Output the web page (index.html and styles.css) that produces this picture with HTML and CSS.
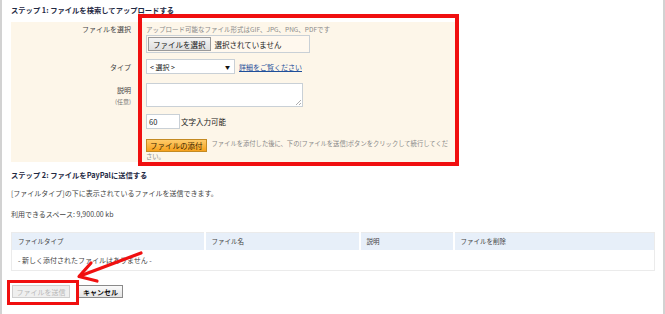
FILE: index.html
```html
<!DOCTYPE html>
<html lang="ja">
<head>
<meta charset="utf-8">
<link rel="stylesheet" href="styles.css">
</head>
<body>
<div class="page">
  <h2 class="step step1">ステップ 1: ファイルを検索してアップロードする</h2>
  <div class="panel">
    <div class="label l1">ファイルを選択</div>
    <div class="field">
      <div class="hint">アップロード可能なファイル形式はGIF、JPG、PNG、PDFです</div>
      <div class="filebox"><span class="filebtn">ファイルを選択</span><span class="nofile">選択されていません</span></div>
    </div>

    <div class="label l2">タイプ</div>
    <div class="field f2">
      <div class="select"><span>&lt; 選択 &gt;</span><span class="caret">▼</span></div>
      <a class="link" href="#">詳細をご覧ください</a>
    </div>

    <div class="label l3">説明<span class="opt">(任意)</span></div>
    <div class="field f3">
      <div class="textarea"><svg class="grip" width="6" height="6" viewBox="0 0 6 6"><path d="M6 1 L1 6 M6 4 L4 6" stroke="#999" stroke-width="0.8"/></svg></div>
    </div>

    <div class="label"></div>
    <div class="field f4">
      <div class="count">60</div><span class="counttext">文字入力可能</span>
    </div>

    <div class="label"></div>
    <div class="field f5">
      <p class="attach"><span class="attachbtn">ファイルの添付</span>ファイルを添付した後に、下の[ファイルを送信]ボタンをクリックして続行してください。</p>
    </div>
  </div>

  <h2 class="step step2">ステップ 2: ファイルをPayPalに送信する</h2>
  <p class="note n1">[ファイルタイプ]の下に表示されているファイルを送信できます。</p>
  <p class="note n2">利用できるスペース: 9,900.00 kb</p>

  <table class="files">
    <thead>
      <tr><th class="c1">ファイルタイプ</th><th class="c2">ファイル名</th><th class="c3">説明</th><th class="c4">ファイルを削除</th></tr>
    </thead>
    <tbody>
      <tr><td colspan="4">- 新しく添付されたファイルはありません -</td></tr>
    </tbody>
  </table>

  <div class="actions">
    <span class="btn disabled">ファイルを送信</span>
    <span class="btn cancel">キャンセル</span>
  </div>

  <div class="mark mark1"></div>
  <div class="mark mark2"></div>
  <svg class="arrow" width="665" height="314" viewBox="0 0 665 314">
    <path d="M141 253 L80 276" stroke="#f01010" stroke-width="3.2" fill="none" stroke-linecap="round"/>
    <path d="M91 263 L79 276.5 L97 281" stroke="#f01010" stroke-width="3.2" fill="none" stroke-linecap="round" stroke-linejoin="round"/>
  </svg>
</div>
</body>
</html>
```

FILE: styles.css
```css
* { box-sizing: border-box; }
html, body { margin: 0; padding: 0; background: #fff; }
body {
  font-family: "Noto Sans CJK JP", "Liberation Sans", sans-serif;
  font-size: 7px;
  color: #333;
}
.page {
  position: relative;
  width: 665px;
  height: 314px;
  border-left: 2px solid #d2d2d2;
  border-right: 2px solid #d2d2d2;
  padding: 0 0 0 9px;
}
.step {
  margin: 0;
  font-size: 7.3px;
  font-weight: bold;
  color: #1f2a44;
  line-height: 10px;
}
.step1 { padding-top: 5px; height: 22px; }
.panel {
  width: 444px;
  height: 140px;
  background: #fdf6e9;
  display: grid;
  grid-template-columns: 120px 1fr;
  column-gap: 15px;
  align-content: start;
  padding-top: 2px;
}
.label {
  text-align: right;
  color: #444;
  line-height: 10px;
}
.l1 { padding-top: 0; }
.l2 { margin-top: 6px; align-self: center; }
.l3 { padding-top: 11px; display: flex; flex-direction: column; align-items: flex-end; }
.opt { font-size: 6px; color: #777; margin-top: 2px; }
.field { padding-right: 4px; }
.hint { color: #8a8a8a; font-size: 6.5px; line-height: 10px; }
.filebox {
  margin-top: 1px;
  width: 164px;
  height: 18px;
  border: 1px solid #c9d0d6;
  background: #fff8ee;
  display: flex;
  align-items: center;
  padding-left: 1px;
}
.filebtn {
  display: inline-flex;
  align-items: center;
  height: 14px;
  padding: 0 4px;
  border: 1px solid #9a9a9a;
  background: linear-gradient(#f4f4f4, #dedede);
  color: #111;
  font-size: 7.5px;
}
.nofile { margin-left: 4px; color: #222; font-size: 7.5px; }
.f2 { margin-top: 6px; display: flex; align-items: center; }
.select {
  width: 89px;
  height: 15px;
  border: 1px solid #c9d0d6;
  background: #fff;
  display: flex;
  align-items: center;
  justify-content: space-between;
  padding: 0 4px 0 3px;
  color: #222;
  white-space: pre;
}
.caret { font-size: 5px; color: #111; }
.link { margin-left: 4px; color: #1f4f9a; text-decoration: underline; }
.f3 { margin-top: 9px; }
.textarea {
  position: relative;
  width: 157px;
  height: 24px;
  border: 1px solid #c9d0d6;
  background: #fff;
}
.grip { position: absolute; right: 1px; bottom: 1px; }
.f4 { margin-top: 7px; display: flex; align-items: center; }
.count {
  width: 34px;
  height: 15px;
  border: 1px solid #c9d0d6;
  background: #fff;
  padding-left: 2px;
  line-height: 13px;
  color: #222;
  font-size: 7.5px;
}
.counttext { margin-left: 1px; font-size: 7.5px; color: #222; }
.f5 { margin-top: 10px; }
.attach {
  margin: 0;
  color: #888;
  font-size: 6.3px;
  line-height: 9px;
}
.attachbtn {
  display: inline-block;
  vertical-align: top;
  height: 13px;
  line-height: 11px;
  padding: 0 3px;
  margin-right: 5px;
  border: 1px solid #c48a22;
  background: linear-gradient(#fecb6a, #f6a11c);
  color: #3a2400;
  font-size: 7.5px;
}
.step2 { margin-top: 8px; }
.note { margin: 0; line-height: 10px; color: #444; }
.n1 { margin-top: 8px; }
.n2 { margin-top: 11px; }
.files {
  margin-top: 13px;
  width: 644px;
  border-collapse: collapse;
  border: 1px solid #ebebeb;
  table-layout: fixed;
}
.files th {
  background: #e7eff9;
  font-weight: normal;
  text-align: left;
  height: 17px;
  padding: 0 0 0 6px;
  color: #444;
  font-size: 6.5px;
  border-left: 2px solid #fff;
}
.files th.c1 { width: 193px; border-left: none; }
.files th.c2 { width: 155px; }
.files th.c3 { width: 94px; }
.files td {
  height: 21px;
  padding: 0 0 0 6px;
  color: #444;
}
.actions { margin-top: 14px; display: flex; gap: 8px; padding-left: 1px; }
.btn {
  display: inline-flex;
  align-items: center;
  justify-content: center;
  height: 13px;
  font-size: 7px;
}
.disabled {
  width: 58px;
  border: 1px solid #cfcfcf;
  background: #efefef;
  color: #b8b8b8;
}
.cancel {
  width: 45px;
  border: 1px solid #8a8a8a;
  background: linear-gradient(#fafafa, #e4e4e4);
  color: #111;
  font-weight: bold;
}
.mark {
  position: absolute;
  border: 4px solid #f00f0f;
}
.mark1 { left: 136px; top: 14px; width: 321px; height: 152px; }
.mark2 { left: 5px; top: 280px; width: 72px; height: 25px; border-width: 3.5px; }
.arrow { position: absolute; left: -2px; top: 0; pointer-events: none; }
```
